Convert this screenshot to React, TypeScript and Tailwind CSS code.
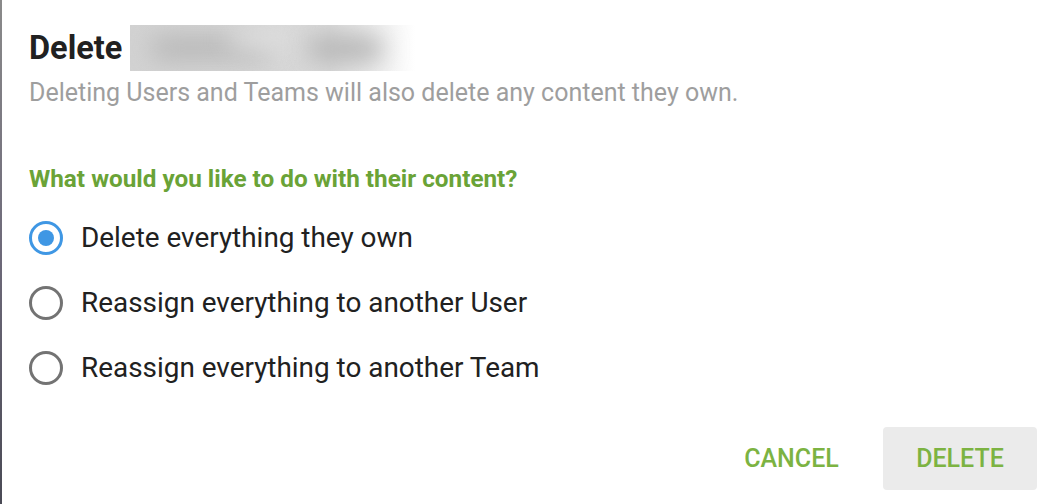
const FONT = "font-['Roboto','Liberation_Sans',sans-serif]";

const OPTIONS = [
  { label: "Delete everything they own", checked: true },
  { label: "Reassign everything to another User", checked: false },
  { label: "Reassign everything to another Team", checked: false },
];

// Radio circle — checked draws the blue ring + dot
function Radio({ checked }: { checked: boolean }) {
  return checked ? (
    <span className="flex h-[34px] w-[34px] shrink-0 items-center justify-center rounded-full border-[3px] border-[#3f97e4]">
      <span className="h-[16px] w-[16px] rounded-full bg-[#3f97e4]" />
    </span>
  ) : (
    <span className="h-[34px] w-[34px] shrink-0 rounded-full border-[3px] border-[#737373]" />
  );
}

// Redacted name — blurry gray smear fading to white
function Redacted() {
  return (
    <div className="relative h-[46px] w-[285px] overflow-hidden bg-gradient-to-r from-[#d2d2d2] via-[#d9d9d9] via-70% to-white">
      <div className="absolute left-[20px] top-[10px] h-[26px] w-[120px] rounded-full bg-[#b9b9b9] blur-md" />
      <div className="absolute left-[100px] top-[4px] h-[20px] w-[60px] rounded-full bg-[#e2e2e2] blur-md" />
      <div className="absolute left-[178px] top-[12px] h-[24px] w-[75px] rounded-full bg-[#b3b3b3] blur-md" />
    </div>
  );
}

export default function App() {
  return (
    <div className={`flex h-[504px] w-[1044px] bg-white ${FONT}`}>
      <div className="w-[2px] bg-gradient-to-b from-[#8a8a8a] via-[#6e6a7a] to-[#4a4a55]" />
      <div className="flex flex-1 flex-col pl-[27px] pr-[7px]">
        <div className="mt-[25px] flex items-center gap-[8px]">
          <h1 className="text-[32.5px] font-bold leading-[46px] text-[#212121]">Delete</h1>
          <Redacted />
        </div>
        <p className="mt-[8px] text-[25px] leading-[28px] text-[#9e9e9e]">
          Deleting Users and Teams will also delete any content they own.
        </p>

        <h2 className="mt-[58px] text-[24.3px] font-bold leading-[28px] text-[#6aa337]">
          What would you like to do with their content?
        </h2>

        <div className="mt-[12px] flex flex-col">
          {OPTIONS.map((o) => (
            <label key={o.label} className="flex h-[65px] items-center gap-[18px]">
              <Radio checked={o.checked} />
              <span className="text-[27.9px] leading-[34px] text-[#212121]">{o.label}</span>
            </label>
          ))}
        </div>

        <div className="mt-[27px] flex justify-end gap-[13px]">
          <button className="h-[63px] w-[157px] rounded-[4px] text-[25px] font-medium text-[#7cb342]">
            CANCEL
          </button>
          <button className="h-[63px] w-[154px] rounded-[4px] bg-[#ebebeb] text-[25px] font-medium text-[#7cb342]">
            DELETE
          </button>
        </div>
      </div>
    </div>
  );
}
